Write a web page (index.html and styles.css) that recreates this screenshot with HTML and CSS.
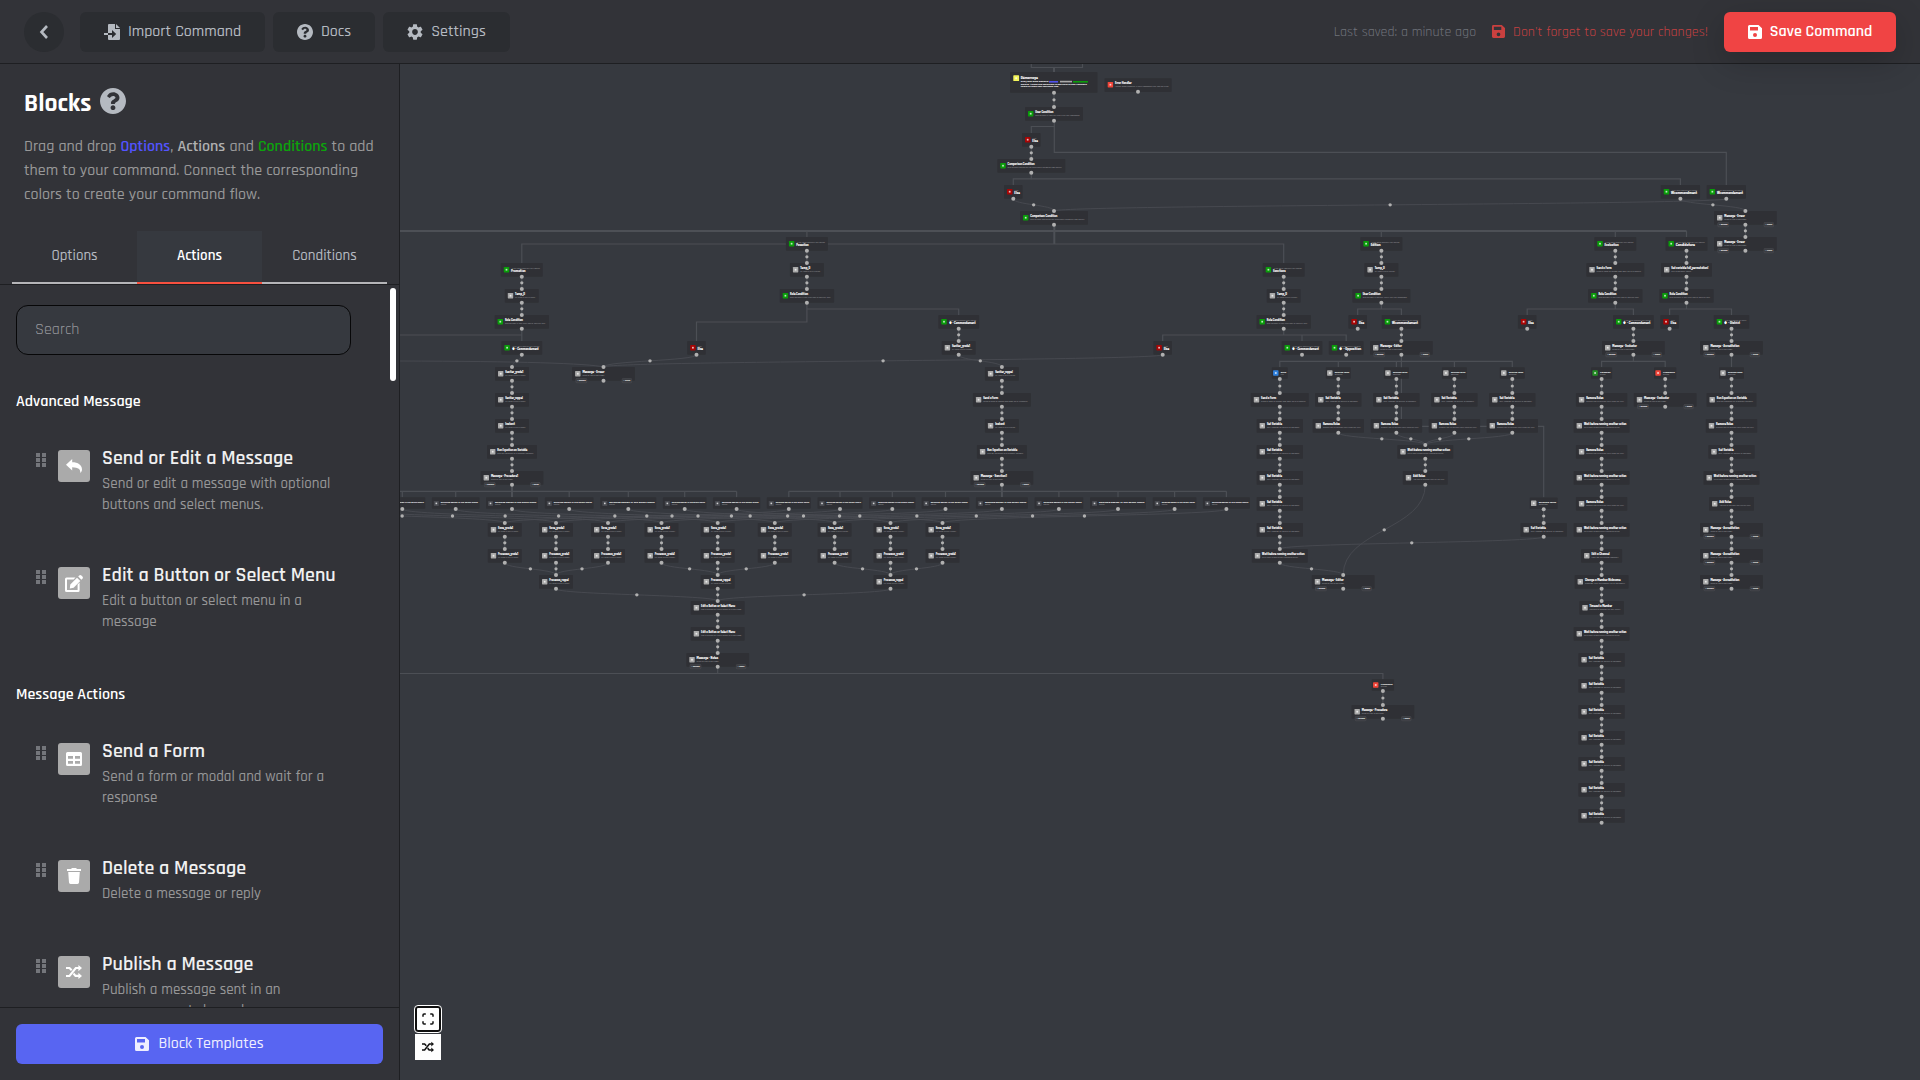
FILE: index.html
```html
<!DOCTYPE html>
<html lang="en">
<head>
<meta charset="utf-8">
<title>Command Builder</title>
<link rel="stylesheet" href="styles.css">
</head>
<body>
<svg class="sprite" aria-hidden="true">
  <symbol id="i-help" viewBox="8 8 496 496"><path d="M504 256c0 136.997-111.043 248-248 248S8 392.997 8 256C8 119.083 119.043 8 256 8s248 111.083 248 248zM262.655 90c-54.497 0-89.255 22.957-116.549 63.758-3.536 5.286-2.353 12.415 2.715 16.258l34.699 26.31c5.205 3.947 12.621 3.008 16.665-2.122 17.864-22.658 30.113-35.797 57.303-35.797 20.429 0 45.698 13.148 45.698 32.958 0 14.976-12.363 22.667-32.534 33.976C247.128 238.528 216 254.941 216 296v4c0 6.627 5.373 12 12 12h56c6.627 0 12-5.373 12-12v-1.333c0-28.462 83.186-29.647 83.186-106.667 0-58.002-60.165-102-116.531-102zM256 338c-25.365 0-46 20.635-46 46 0 25.364 20.635 46 46 46s46-20.636 46-46c0-25.365-20.635-46-46-46z"/></symbol>
  <symbol id="i-cog" viewBox="2 2 20 20"><path d="M19.14 12.94c.04-.3.06-.61.06-.94 0-.32-.02-.64-.07-.94l2.03-1.58c.18-.14.23-.41.12-.61l-1.92-3.32c-.12-.22-.37-.29-.59-.22l-2.39.96c-.5-.38-1.03-.7-1.62-.94l-.36-2.54c-.04-.24-.24-.41-.48-.41h-3.84c-.24 0-.43.17-.47.41l-.36 2.54c-.59.24-1.13.57-1.62.94l-2.39-.96c-.22-.08-.47 0-.59.22L2.74 8.87c-.12.21-.08.47.12.61l2.03 1.58c-.05.3-.09.63-.09.94s.02.64.07.94l-2.03 1.58c-.18.14-.23.41-.12.61l1.92 3.32c.12.22.37.29.59.22l2.39-.96c.5.38 1.03.7 1.62.94l.36 2.54c.05.24.24.41.48.41h3.84c.24 0 .44-.17.47-.41l.36-2.54c.59-.24 1.13-.56 1.62-.94l2.39.96c.22.08.47 0 .59-.22l1.92-3.32c.12-.22.07-.47-.12-.61l-2.01-1.58zM12 15.6c-1.98 0-3.6-1.62-3.6-3.6s1.62-3.6 3.6-3.6 3.6 1.62 3.6 3.6-1.62 3.6-3.6 3.6z"/></symbol>
  <symbol id="i-import" viewBox="0 0 16 16"><path d="M5 0h6v5h5v10a1 1 0 0 1-1 1H5a1 1 0 0 1-1-1v-4h4v3l4.2-4L8 6v3H4V1a1 1 0 0 1 1-1zM12 0l4 4h-4zM0 9.1h4v1.8H0z"/></symbol>
  <symbol id="i-back" viewBox="0 0 16 16"><path d="M11 2 5.500 8l5.500 6" fill="none" stroke="currentColor" stroke-width="2.600"/></symbol>
  <symbol id="i-save" viewBox="0 0 14 14"><path fill-rule="evenodd" d="M1.500 0h9L14 3.300v9.200A1.500 1.500 0 0 1 12.500 14h-11A1.500 1.500 0 0 1 0 12.500v-11A1.500 1.500 0 0 1 1.500 0zM2 2v3.400h8V2zM7 8a2 2 0 1 0 0 4 2 2 0 0 0 0-4z"/></symbol>
  <symbol id="i-reply" viewBox="0 0 16 14"><path d="M6.200 0v3.300C12 3.300 16 6 16 10.500c0 1.500-.8 2.700-1.700 3.400C14.600 10.300 12.500 8.300 6.200 8.200v3.200L0 5.700z"/></symbol>
  <symbol id="i-edit" viewBox="0 0 18 17"><path d="M2 2.500h8.500L8.600 4.400H2v10.700h10.600V9.600l2-2V15.500a1.500 1.500 0 0 1-1.500 1.500H1.500A1.500 1.500 0 0 1 0 15.500V4a1.500 1.500 0 0 1 1.500-1.500zM12 2.800l3.300 3.300-6.700 6.700-3.800.6.500-3.900zM13.200 1.600l1-1a1.600 1.600 0 0 1 2.200 0l1 1a1.600 1.600 0 0 1 0 2.200l-1 1z"/></symbol>
  <symbol id="i-form" viewBox="0 0 16 14"><path fill-rule="evenodd" d="M1.500 0h13A1.500 1.500 0 0 1 16 1.500v11a1.500 1.500 0 0 1-1.500 1.500h-13A1.500 1.500 0 0 1 0 12.500v-11A1.500 1.500 0 0 1 1.500 0zM2 4v2.800h5V4zM9 4v2.800h5V4zM2 8.900v2.800h5V8.900zM9 8.900v2.800h5V8.900z"/></symbol>
  <symbol id="i-trash" viewBox="0 0 14 16"><path d="M0 1h4l1-1h4l1 1h4v2H0zM1.200 4h11.600l-.8 10.600a1.500 1.500 0 0 1-1.500 1.400h-7A1.500 1.500 0 0 1 2 14.600z"/></symbol>
  <symbol id="i-random" viewBox="0 0 16 14"><path d="M0 3h3.500l2.200 2.300M7.500 8.500 9.500 10.900H13M0 11h3.500L9.800 3H13" fill="none" stroke="currentColor" stroke-width="2.100"/><path d="M12.400 0 16 3l-3.600 3.200zM12.400 7.800 16 11l-3.600 3z"/></symbol>
  <symbol id="i-full" viewBox="0 0 12 12"><path d="M1 3.800V2a1 1 0 0 1 1-1h1.800M8.200 1H10a1 1 0 0 1 1 1v1.800M11 8.200V10a1 1 0 0 1-1 1H8.200M3.800 11H2a1 1 0 0 1-1-1V8.200" fill="none" stroke="currentColor" stroke-width="1.500"/></symbol>
  <symbol id="i-grip" viewBox="0 0 10 14"><path d="M0 0h4v4H0zM6 0h4v4H6zM0 5h4v4H0zM6 5h4v4H6zM0 10h4v4H0zM6 10h4v4H6z"/></symbol>
</svg>
<div class="app">
  <header class="topbar">
    <button class="back"><svg class="ic16"><use href="#i-back"/></svg></button>
    <button class="nav nav-import"><svg class="ic16"><use href="#i-import"/></svg><span>Import Command</span></button>
    <button class="nav nav-docs"><svg class="ic16"><use href="#i-help"/></svg><span>Docs</span></button>
    <button class="nav nav-settings"><svg class="ic16"><use href="#i-cog"/></svg><span>Settings</span></button>
    <div class="status">
      <span class="saved">Last saved: a minute ago</span>
      <svg class="ic13"><use href="#i-save"/></svg>
      <span class="warn">Don't forget to save your changes!</span>
    </div>
    <button class="save"><svg class="ic14"><use href="#i-save"/></svg><span>Save Command</span></button>
  </header>
  <div class="work">
    <aside class="side">
      <div class="intro">
        <h1>Blocks<svg class="ic26"><use href="#i-help"/></svg></h1>
        <p>Drag and drop <b class="opt">Options</b>, <b class="act">Actions</b> and <b class="con">Conditions</b> to add<br>them to your command. Connect the corresponding<br>colors to create your command flow.</p>
      </div>
      <nav class="tabs"><a>Options</a><a class="on">Actions</a><a>Conditions</a></nav>
      <div class="list">
        <div class="items">
          <div class="search">Search</div>
          <h2>Advanced Message</h2>
          <div class="item"><svg class="grip"><use href="#i-grip"/></svg><i class="tile"><svg class="g16"><use href="#i-reply"/></svg></i><div class="txt"><h3>Send or Edit a Message</h3><p>Send or edit a message with optional<br>buttons and select menus.</p></div></div>
          <div class="item"><svg class="grip"><use href="#i-grip"/></svg><i class="tile"><svg class="g18"><use href="#i-edit"/></svg></i><div class="txt"><h3>Edit a Button or Select Menu</h3><p>Edit a button or select menu in a<br>message</p></div></div>
          <h2>Message Actions</h2>
          <div class="item"><svg class="grip"><use href="#i-grip"/></svg><i class="tile"><svg class="g16"><use href="#i-form"/></svg></i><div class="txt"><h3>Send a Form</h3><p>Send a form or modal and wait for a<br>response</p></div></div>
          <div class="item"><svg class="grip"><use href="#i-grip"/></svg><i class="tile"><svg class="g14"><use href="#i-trash"/></svg></i><div class="txt"><h3>Delete a Message</h3><p>Delete a message or reply</p></div></div>
          <div class="item"><svg class="grip"><use href="#i-grip"/></svg><i class="tile"><svg class="g16"><use href="#i-random"/></svg></i><div class="txt"><h3>Publish a Message</h3><p>Publish a message sent in an<br>announcement channel</p></div></div>
        </div>
        <div class="bar"></div>
      </div>
      <div class="foot"><button class="templates"><svg class="ic14"><use href="#i-save"/></svg><span>Block Templates</span></button></div>
    </aside>
    <main class="canvas">
      <svg id="flow" class="flow" viewBox="400 64 1520 1016" width="1520" height="1016"></svg>
      <div class="controls"><button class="ctl focus"><svg class="c12"><use href="#i-full"/></svg></button><button class="ctl"><svg class="c12"><use href="#i-random"/></svg></button></div>
    </main>
  </div>
</div>
<script src="flow.js"></script>
</body>
</html>
```
FILE: styles.css
```css
* { box-sizing: border-box; }
body { margin: 0; background: #36393f; font-family: Rajdhani, Roboto, "Liberation Sans", sans-serif; color: #fff; overflow: hidden; }
button { border: 0; padding: 0; font: inherit; color: inherit; display: flex; align-items: center; justify-content: center; }
svg { fill: currentColor; flex: none; display: block; }
.sprite { position: absolute; width: 0; height: 0; }
h1, h2, h3, p { margin: 0; }
.app { width: 1920px; height: 1080px; display: flex; flex-direction: column; }

.topbar { height: 64px; flex: none; display: flex; align-items: center; padding: 0 24px; background: #323338; border-bottom: 1px solid #1e1f22; color: #b5bac1; position: relative; z-index: 2; }
.back { width: 40px; height: 40px; border-radius: 50%; background: #2b2d31; margin-right: 16px; }
.nav { height: 40px; border-radius: 6px; background: #2b2d31; margin-right: 8px; gap: 8px; font-size: 16px; font-weight: 500; }
.nav-import { width: 185px; }
.nav-docs { width: 102px; }
.nav-settings { width: 127px; }
.status { margin-left: auto; display: flex; align-items: center; font-size: 14px; margin-right: 16px; }
.saved { color: #6f727a; margin-right: 16px; }
.status svg { color: #c9403f; margin-right: 8px; }
.warn { color: #c44142; }
.save { width: 172px; height: 40px; border-radius: 6px; background: #f04444; color: #fff; gap: 8px; font-size: 16px; font-weight: 600; box-shadow: 0 10px 34px rgba(0,0,0,.2); }
.ic16 { width: 16px; height: 16px; }
.ic14 { width: 14px; height: 14px; }
.ic13 { width: 13px; height: 13px; }
.ic26 { width: 26px; height: 26px; }

.work { flex: 1; display: flex; min-height: 0; }
.side { width: 400px; flex: none; display: flex; flex-direction: column; background: #323338; border-right: 1px solid #1e1f22; }
.intro { height: 167px; padding: 24px 24px 0; }
.intro h1 { font-size: 25.600px; line-height: 32px; height: 47px; font-weight: 700; display: flex; gap: 9px; }
.intro h1 svg { color: #b5bac1; }
.intro p { font-size: 16px; line-height: 24px; color: #989898; font-weight: 500; white-space: nowrap; }
.intro b { font-weight: 600; }
.opt { color: #5353ff; }
.act { color: #b0b0b0; }
.con { color: #0ca30c; }
.tabs { margin: 0 12px; height: 53px; display: grid; grid-template-columns: repeat(3, 125px); font-size: 15px; font-weight: 500; color: #b5bac1; }
.tabs a { display: flex; align-items: center; justify-content: center; padding-bottom: 3px; border-bottom: 2px solid #b5b5b8; }
.tabs .on { background: #36393f; border-bottom-color: #f8503f; color: #fff; font-weight: 600; }
.list { flex: 1; min-height: 0; border-top: 1px solid #1e1f22; display: flex; justify-content: space-between; overflow: hidden; }
.items { padding: 20px 0 0 16px; width: 351px; }
.search { height: 50px; border: 1px solid #070708; border-radius: 12px; background: #36393f; color: #96989d; font-size: 16px; font-weight: 400; line-height: 47px; padding-left: 18px; margin-bottom: 16px; }
.items h2 { font-size: 16px; line-height: 24px; font-weight: 600; padding: 19px 0 16px; }
.item { display: flex; padding: 16px 0 0 20px; height: 117px; white-space: nowrap; }
.item:nth-of-type(5) { height: 96px; }
.grip { width: 10px; height: 14px; color: #74767b; margin: 7px 12px 0 0; }
.tile { width: 32px; height: 32px; border-radius: 3px; background: #aaa; display: flex; align-items: center; justify-content: center; margin: 4px 12px 0 0; }
.g18 { width: 18px; height: 17px; }
.g16 { width: 16px; height: 14px; }
.g14 { width: 14px; height: 16px; }
.txt h3 { font-size: 20px; line-height: 24px; font-weight: 600; color: #f0f0f0; margin-bottom: 3px; }
.txt p { font-size: 15px; line-height: 21px; color: #969697; font-weight: 500; }
.bar { width: 6px; height: 93px; border-radius: 3px; background: #fff; margin: 3px 3px 0 0; }
.foot { height: 73px; flex: none; border-top: 1px solid #1e1f22; padding: 16px; }
.templates { width: 367px; height: 40px; border-radius: 6px; background: #5865f2; color: #eef; gap: 9px; font-size: 16px; font-weight: 500; }
.templates span { padding-bottom: 2px; }

.canvas { flex: 1; position: relative; background: #36393f; overflow: hidden; }
.flow { position: absolute; inset: 0; }
.controls { position: absolute; left: 15px; bottom: 20px; }
.ctl { width: 26px; height: 26px; background: #fefefe; color: #111; margin-top: 2px; }
.focus { border-radius: 3px; border: 2px solid #101010; outline: 1px solid #fff; }
.c12 { width: 12px; height: 12px; }

.edge { fill: none; stroke: #4c4f55; stroke-width: 1.2; }
.edge.main { stroke: #4d5056; stroke-width: 2; }
.edge.hair { stroke: #484b51; stroke-width: .9; }
.box { fill: #2f3035; }
.port { fill: #b0b0b0; }
.t { fill: #fff; font-weight: 700; font-size: 4px; stroke: #fff; stroke-width: .12; }
.s { fill: #a0a1a5; font-size: 2px; font-weight: 500; }
.m { fill: #fff; font-size: 2.300px; font-weight: 700; }
.chip { fill: #3b3d42; stroke: #55575c; stroke-width: .4; }
```
FILE: flow.js
```js
const R = k => 107 + 26 * k;
let lines = '', boxes = '', ports = '';
const port = (x, y, r = 2) => { ports += `<circle class="port" cx="${x}" cy="${y}" r="${r}"/>`; };
const text = (c, x, y, w, s) => `<text class="${c}" x="${x}" y="${y}" textLength="${w}" lengthAdjust="spacingAndGlyphs">${s}</text>`;
const line = (pts, c = '') => { lines += `<polyline class="edge ${c}" points="${pts}"/>`; };

// kind: [width, icon colour, title, title width, description]
const GREY = '#aaaaaa', GREEN = '#0a9d0a', RED = '#a80505';
const kinds = {
  user: [58, GREEN, 'User Condition', 18, 'Run actions if specific users use the command.'],
  role: [54.4, GREEN, 'Role Condition', 18, 'Run actions if the user has a specific role.'],
  comp: [68, GREEN, 'Comparison Condition', 27, 'Run actions based on the difference between two values.'],
  setv: [46.4, GREY, 'Set Variable', 15, 'Set, change or delete a variable.'],
  rem: [51.4, GREY, 'Remove Roles', 17, 'Remove one or multiple roles from the user.'],
  add: [45, GREY, 'Add Roles', 12, 'Add one or multiple roles to the user.'],
  wait: [56, GREY, 'Wait before running another action', 42.5, 'Set a timer or wait before running an action.'],
  form: [58, GREY, 'Send a Form', 15, 'Send a form or modal and wait for a response'],
  eq: [50, GREY, 'Run Equation on Variable', 30, 'Run an equation to a number variable.'],
  ebtn: [54, GREY, 'Edit a Button or Select Menu', 34, 'Edit a button or select menu in a message'],
  chan: [41, GREY, 'Edit a Channel', 18, 'Edit an existing channel.'],
  nick: [54, GREY, 'Change a Member Nickname', 35.5, 'Change the nickname of a member.'],
  kick: [44.6, GREY, 'Timeout a Member', 22.5, 'Timeout a member of the server.']
};
const tile = (x, y, c, s = 5.4) => `<rect x="${x}" y="${y}" width="${s}" height="${s}" rx=".6" fill="${c}"/><rect x="${x + s * .34}" y="${y + s * .34}" width="${s * .32}" height="${s * .32}" fill="#fff" opacity=".75"/>`;
const frame = (cx, y, w, h = 13.7) => `<rect class="box" x="${cx - w / 2}" y="${y}" width="${w}" height="${h}" rx=".8"/>`;

function block(cx, y, w, colour, title, tw, desc, dw) {
  const x = cx - w / 2;
  boxes += frame(cx, y, w) + tile(x + 3, y + 4, colour) + text('t', x + 10.300, y + 6, tw, title) + text('s', x + 10.300, y + 8.9, dw || w - 13.500, desc);
  port(cx, y); port(cx, y + 13.700);
}
const node = (k, cx, row) => { const a = kinds[k]; block(cx, R(row), ...a, k === 'wait' ? 36 : 0); };
const variable = (cx, row, name, tw) => block(cx, R(row), 34, GREY, name, tw, 'Set, change or delete a variable.');
function message(cx, row, name, tw) {
  const y = R(row), x = cx - 31.400;
  block(cx, y, 62.800, GREY, 'Message - ' + name, tw, 'Send or edit a message', 22);
  boxes += `<rect class="chip" x="${x + 3.700}" y="${y + 11.400}" width="11" height="4.400" rx="1"/>` + text('m', x + 5, y + 14.400, 8.500, '+ Buttons')
    + `<rect class="chip" x="${x + 50}" y="${y + 11.400}" width="9.600" height="4.400" rx="1"/>` + text('m', x + 51.200, y + 14.400, 7, '+ Menu');
}
function branch(cx, row, w, title, tw) {
  const y = R(row), x = cx - w / 2;
  boxes += frame(cx, y, w) + tile(x + 3, y + 4, GREEN) + text('s', x + 11, y + 6, w - 14, 'If the value matches this option') + text('t', x + 10.300, y + 8.700, tw, title);
  port(cx, y + 13.700);
}
function otherwise(cx, row) {
  const y = R(row), x = cx - 9.300;
  boxes += frame(cx, y, 18.600) + tile(x + 3, y + 4, RED) + text('s', x + 10.600, y + 5.9, 4, 'Else') + text('t', x + 10.300, y + 8.900, 5.500, 'Else');
  port(cx, y + 13.700);
}
function button(cx, y, w, colour, label) {
  const x = cx - w / 2;
  boxes += frame(cx, y, w, 11.500) + tile(x + 1.300, y + 3, colour) + text('m', x + 9, y + 5.200, w - 10.500, label) + text('s', x + 9, y + 7.600, (w - 10) * .5, 'Button');
  port(cx, y + 11.600);
}
function choice(cx, w) {
  const x = cx - w / 2, y = 497.300;
  boxes += frame(cx, y, w, 11.500) + tile(x + 2, y + 3.600, '#484a50', 5) + text('m', x + 9, y + 6, w - 10.600, 'Selected option in the select menu') + text('s', x + 9, y + 8.100, 5.500, 'Option');
  port(cx, 509);
}
function curve(x1, y1, x2, y2) {
  const m = (y1 + y2) / 2;
  lines += `<path class="edge hair" d="M${x1} ${y1}C${x1} ${m} ${x2} ${m} ${x2} ${y2}"/>`;
  port((x1 + x2) / 2, m, 1.700);
}
// straight connection between two stacked rows
const link = (cx, y1, y2) => { line(`${cx},${y1} ${cx},${y2}`); port(cx, (y1 + y2) / 2, 1.600); };
const stack = (cx, from, to) => { for (let k = from; k < to; k++) link(cx, R(k) + 13.700, R(k + 1)); };

// trunk
line('1031.300,64 1031.300,67.500 1082.500,67.500 1082.500,64'); line('1054,67.500 1054,72', 'main');
boxes += '<rect class="box" x="1010" y="72" width="87.500" height="20.700" rx=".8"/>' + tile(1013.300, 75.300, '#f4f45a', 5.800)
  + text('t', 1020.800, 79, 17, 'Démarrage') + text('m', 1020.800, 82.400, 28, 'Drag and drop Options,')
  + text('m', 1020.800, 84.800, 66, 'Options, Actions and Conditions to add them to your command') + text('m', 1020.800, 87.400, 38, 'colors to create your command flow.')
  + '<rect x="1049" y="81" width="9" height="1.600" fill="#5151ee"/><rect x="1060" y="80.800" width="12" height="1.600" fill="#aaa"/><rect x="1073" y="81" width="15" height="1.600" fill="#0a9d0a"/>';
port(1054, 92.700); link(1054, 92.700, 107);
boxes += '<rect class="box" x="1104.500" y="78.300" width="67.200" height="13.700" rx=".8"/>' + tile(1107.700, 82, '#f04438') + text('t', 1115, 84, 16.500, 'Error Handler') + text('s', 1115, 87, 54, 'Handle what happens if your command runs into an error.');
port(1138, 91.700);
node('user', 1054, 0); otherwise(1031.300, 1); stack(1031.300, 1, 2); node('comp', 1031.300, 2); otherwise(1013.300, 3); node('comp', 1054, 4);
line('1054.300,120.700 1054.300,126.500 1031.300,126.500 1031.300,133'); line('1054.300,126 1054.300,152.300 1726.300,152.300 1726.300,185');
line('1031.300,172.700 1031.300,178.800 1013.300,178.800 1013.300,185'); line('1031.300,178.800 1680.400,178.800 1680.400,185');
branch(1680.400, 3, 39.300, 'Wcommandment', 26); branch(1726.300, 3, 39.300, 'Wcommandement', 26);
curve(1013.300, 198.700, 1054, 211); curve(1726.300, 198.700, 1054, 211); curve(1680.400, 198.700, 1745.400, 211);
message(1745.400, 4, 'Erreur', 20.500); message(1745.400, 5, 'Erreur', 20.500); stack(1745.400, 4, 5);
line('1054.300,224.700 1054.300,244', 'main');
line('400,231 1686.500,231', 'main'); line('521.800,263 521.800,244 1283.700,244 1283.700,263');
[806.900, 1381.300, 1615.300, 1686.500].forEach(x => line(`${x},231 ${x},237`));

// far left column
branch(521.800, 6, 42, 'Promotion', 14.500); variable(521.800, 7, 'Temp_D', 10); node('role', 521.800, 8); stack(521.800, 6, 8);
line('400,335 521.800,335'); line('521.800,328.700 521.800,341');
branch(521.800, 9, 40.800, '⚜ - Commandement', 27); curve(521.800, 354.700, 512, 367);
[['Sentier_grade1', 18], ['Sentier_rappel', 17.500], ['Instant', 9.500]].forEach((v, i) => variable(512, 10 + i, ...v));
node('eq', 512, 13); message(512, 14, 'Procedure1', 27); stack(512, 10, 14);
curve(696.500, 354.700, 603.500, 367); curve(1162.700, 354.700, 603.500, 367);
lines += '<path class="edge hair" d="M400 361Q580 361.500 603.500 367"/>';
message(603.500, 10, 'Erreur', 22); otherwise(696.500, 9);

// second column
branch(806.900, 5, 42, 'Passation', 12.500); variable(806.900, 6, 'Temp_D', 10); node('role', 806.900, 7); stack(806.900, 5, 7);
line('806.900,302.700 806.900,322 696.500,322 696.500,341'); line('806.900,309 958.700,309 958.700,315');
branch(958.700, 8, 40.800, '⚜ - Commandement', 27); variable(958.700, 9, 'Sentier_grade1', 18); stack(958.700, 8, 9); curve(958.700, 354.700, 1001.900, 367);
variable(1001.900, 10, 'Sentier_rappel', 17.500); node('form', 1001.900, 11); variable(1001.900, 12, 'Instant', 9.500); node('eq', 1001.900, 13); message(1001.900, 14, 'Sanction1', 26); stack(1001.900, 10, 14);

// select menu options
const menuA = [[402.300, 46], [455.700, 47.700], [512, 52], [569.200, 48.700], [628.300, 56], [684.700, 43.700], [736.600, 47.300]];
const menuB = [[788.800, 44], [840, 45], [892.300, 46.300], [945.500, 47.700], [1001.900, 52], [1058.900, 48.700], [1118, 56], [1174.600, 43.700], [1226.400, 47]];
const saves = [504.800, 556, 608, 661.500, 717.700, 774.800, 834.600, 890.500, 942.500];
line('400,491.300 736.600,491.300'); line('788.800,491.300 1226.400,491.300');
[...menuA, ...menuB].forEach(([x, w]) => { choice(x, w); line(`${x},491.300 ${x},497.300`); });
line('512,484.700 512,497', 'main'); line('1001.900,484.700 1001.900,497', 'main');
menuA.forEach(([x], i) => curve(x, 509, saves[i + 2], 523));
menuB.forEach(([x], i) => curve(x, 509, saves[i], 523));
curve(349, 509, 556, 523); curve(299.500, 509, 504.800, 523);
saves.forEach(x => { variable(x, 16, 'Save_grade1', 15); variable(x, 17, 'Processus_grade1', 20); stack(x, 16, 17); });
[[0, 1, 2], [3, 4, 5], [6, 7, 8]].forEach(([a, b, c]) => {
  curve(saves[a], 562.700, saves[b], 575); curve(saves[c], 562.700, saves[b], 575);
  stack(saves[b], 17, 18); variable(saves[b], 18, 'Processus_rappel', 19.500);
});
curve(556, 588.700, 717.700, 601); curve(890.500, 588.700, 717.700, 601); stack(717.700, 18, 21);
node('ebtn', 717.700, 19); node('ebtn', 717.700, 20); message(717.700, 21, 'Notes', 21.500);
line('400,673.500 1382.900,673.500 1382.900,679.300'); line('717.700,666.700 717.700,673.500');
button(1382.900, 679.300, 22.300, '#f04438', 'Procedure'); link(1382.900, 691, 705); message(1382.900, 23, 'Procedure', 25.500);

// middle columns
branch(1283.700, 6, 42, 'Sanctions', 12.500); variable(1283.700, 7, 'Temp_D', 10); node('role', 1283.700, 8); stack(1283.700, 6, 8);
line('1283.700,328.700 1283.700,335'); line('1162.700,341 1162.700,335 1346.200,335 1346.200,341'); line('1302,335 1302,341');
otherwise(1162.700, 9); branch(1302, 9, 40.800, '⚜ - Commandement', 27); branch(1346.200, 9, 34.800, '⚜ - Opposition', 22);
branch(1381.400, 5, 42, 'Edition', 10); variable(1381.400, 6, 'Temp_D', 10); node('user', 1381.400, 7); stack(1381.400, 5, 7);
line('1381.400,302.700 1381.400,309'); line('1357.700,315 1357.700,309 1401.400,309 1401.400,315');
otherwise(1357.700, 8); branch(1401.400, 8, 39.300, 'Wcommandement', 26); message(1401.400, 9, 'Editor', 21.500); stack(1401.400, 8, 9);
line('1401.400,354.700 1401.400,426.300 1543.700,426.300 1543.700,497.300'); line('1279.800,367 1279.800,361.300 1512.300,361.300 1512.300,367');
[1338.300, 1396.400, 1454.400].forEach(x => line(`${x},361.300 ${x},367`));
button(1279.800, 367.300, 16, '#2f80dd', 'Suite'); link(1279.800, 379, 393);
node('form', 1279.800, 11); for (let k = 12; k < 17; k++) node('setv', 1279.800, k); node('wait', 1279.800, 17); stack(1279.800, 11, 17);
[1338.300, 1396.400, 1454.400, 1512.300].forEach(x => {
  button(x, 367.300, 25, GREY, 'Selected value'); link(x, 379, 393); node('setv', x, 11); node('rem', x, 12); stack(x, 11, 12); curve(x, 432.700, 1425.300, 445);
});
node('wait', 1425.300, 13); node('add', 1425.300, 14); stack(1425.300, 13, 14); curve(1425.300, 484.700, 1343.200, 575);
button(1543.700, 497.600, 28, GREY, 'Selected value'); link(1543.700, 509, 523); node('setv', 1543.700, 16);
curve(1543.700, 536.700, 1279.800, 549); curve(1279.800, 562.700, 1343.200, 575); message(1343.200, 18, 'Editor', 21.500);

// right columns
branch(1615.300, 5, 42, 'Evaluation', 14); node('form', 1615.300, 6); node('role', 1615.300, 7); stack(1615.300, 5, 7);
line('1615.300,302.700 1615.300,309'); line('1527.200,315 1527.200,309 1633.400,309 1633.400,315');
otherwise(1527.200, 8); branch(1633.400, 8, 40.800, '⚜ - Commandement', 27); message(1633.400, 9, 'Evaluator', 24.500); stack(1633.400, 8, 9);
line('1633.400,354.700 1633.400,361.300'); line('1601.600,367 1601.600,361.300 1665.200,361.300 1665.200,367');
button(1601.600, 367.300, 21, '#249024', 'Validation'); button(1665.200, 367.300, 22.300, '#f04438', 'Procedure');
link(1601.600, 379, 393); link(1665.200, 379, 393); message(1665.200, 11, 'Evaluator', 25);
['rem', 'wait', 'rem', 'wait', 'rem', 'wait', 'chan', 'nick', 'kick', 'wait', 'setv', 'setv', 'setv', 'setv', 'setv', 'setv', 'setv'].forEach((k, i) => node(k, 1601.600, 11 + i));
stack(1601.600, 11, 27);
branch(1686.500, 5, 42, 'Candidature', 19); block(1686.500, R(6), 51, GREY, 'Set variable full_permutation!', 37, 'Set a variable value', 20); node('role', 1686.500, 7); stack(1686.500, 5, 7);
line('1686.500,302.700 1686.500,309'); line('1669.600,315 1669.600,309 1731.500,309 1731.500,315');
otherwise(1669.600, 8); branch(1731.500, 8, 35.500, '⚜ - District', 16); message(1731.500, 9, 'Accreditation', 29); stack(1731.500, 8, 9);
line('1731.500,354.700 1731.500,367'); button(1731.500, 367.300, 25, GREY, 'Selected value'); link(1731.500, 379, 393);
['eq', 'rem', 'setv', 'wait', 'add'].forEach((k, i) => node(k, 1731.500, 11 + i));
[16, 17, 18].forEach(k => message(1731.500, k, 'Accreditation', 29)); stack(1731.500, 11, 18);

document.getElementById('flow').innerHTML = lines + boxes + ports;
```
